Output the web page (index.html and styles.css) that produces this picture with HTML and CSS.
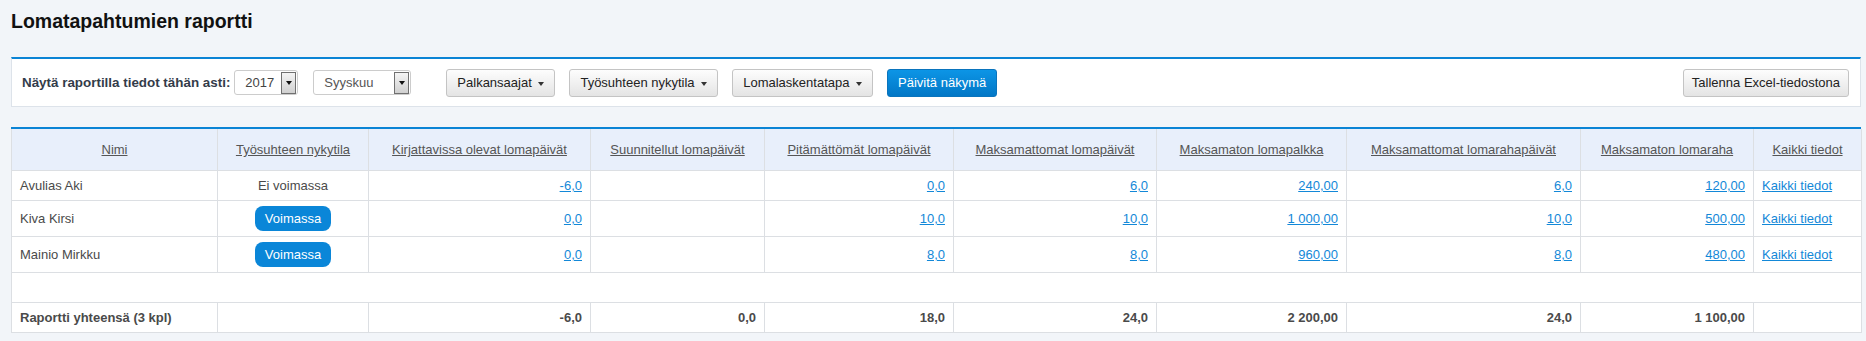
FILE: index.html
```html
<!DOCTYPE html>
<html lang="fi">
<head>
    <meta charset="UTF-8">
    <meta name="viewport" content="width=device-width, initial-scale=1.0">
    <title>Lomatapahtumien raportti</title>
    <link rel="stylesheet" href="styles.css">
</head>
<body>
    <div class="page">
        <h1 class="page-title">Lomatapahtumien raportti</h1>

        <div class="panel toolbar">
            <span class="toolbar-label">Näytä raportilla tiedot tähän asti:</span>
            <div class="fake-select select-year">
                <span class="fake-select-value">2017</span>
                <span class="fake-select-arrow"></span>
            </div>
            <div class="fake-select select-month">
                <span class="fake-select-value">Syyskuu</span>
                <span class="fake-select-arrow"></span>
            </div>
            <button class="btn btn-first">Palkansaajat <span class="caret"></span></button>
            <button class="btn">Työsuhteen nykytila <span class="caret"></span></button>
            <button class="btn">Lomalaskentatapa <span class="caret"></span></button>
            <button class="btn btn-primary">Päivitä näkymä</button>
            <button class="btn btn-export">Tallenna Excel-tiedostona</button>
        </div>

        <div class="panel report">
            <table class="report-table">
                <colgroup>
                    <col class="col-name">
                    <col class="col-status">
                    <col class="col-booked">
                    <col class="col-planned">
                    <col class="col-unused">
                    <col class="col-unpaid-days">
                    <col class="col-unpaid-pay">
                    <col class="col-bonus-days">
                    <col class="col-bonus">
                    <col class="col-all">
                </colgroup>
                <thead>
                    <tr>
                        <th><a href="#">Nimi</a></th>
                        <th><a href="#">Työsuhteen nykytila</a></th>
                        <th><a href="#">Kirjattavissa olevat lomapäivät</a></th>
                        <th><a href="#">Suunnitellut lomapäivät</a></th>
                        <th><a href="#">Pitämättömät lomapäivät</a></th>
                        <th><a href="#">Maksamattomat lomapäivät</a></th>
                        <th><a href="#">Maksamaton lomapalkka</a></th>
                        <th><a href="#">Maksamattomat lomarahapäivät</a></th>
                        <th><a href="#">Maksamaton lomaraha</a></th>
                        <th><a href="#">Kaikki tiedot</a></th>
                    </tr>
                </thead>
                <tbody>
                    <tr>
                        <td>Avulias Aki</td>
                        <td class="center">Ei voimassa</td>
                        <td class="num"><a href="#">-6,0</a></td>
                        <td class="num"></td>
                        <td class="num"><a href="#">0,0</a></td>
                        <td class="num"><a href="#">6,0</a></td>
                        <td class="num"><a href="#">240,00</a></td>
                        <td class="num"><a href="#">6,0</a></td>
                        <td class="num"><a href="#">120,00</a></td>
                        <td><a href="#">Kaikki tiedot</a></td>
                    </tr>
                    <tr>
                        <td>Kiva Kirsi</td>
                        <td class="center"><span class="badge">Voimassa</span></td>
                        <td class="num"><a href="#">0,0</a></td>
                        <td class="num"></td>
                        <td class="num"><a href="#">10,0</a></td>
                        <td class="num"><a href="#">10,0</a></td>
                        <td class="num"><a href="#">1 000,00</a></td>
                        <td class="num"><a href="#">10,0</a></td>
                        <td class="num"><a href="#">500,00</a></td>
                        <td><a href="#">Kaikki tiedot</a></td>
                    </tr>
                    <tr>
                        <td>Mainio Mirkku</td>
                        <td class="center"><span class="badge">Voimassa</span></td>
                        <td class="num"><a href="#">0,0</a></td>
                        <td class="num"></td>
                        <td class="num"><a href="#">8,0</a></td>
                        <td class="num"><a href="#">8,0</a></td>
                        <td class="num"><a href="#">960,00</a></td>
                        <td class="num"><a href="#">8,0</a></td>
                        <td class="num"><a href="#">480,00</a></td>
                        <td><a href="#">Kaikki tiedot</a></td>
                    </tr>
                    <tr class="spacer-row">
                        <td colspan="10">&nbsp;</td>
                    </tr>
                </tbody>
                <tfoot>
                    <tr>
                        <td>Raportti yhteensä (3 kpl)</td>
                        <td></td>
                        <td class="num">-6,0</td>
                        <td class="num">0,0</td>
                        <td class="num">18,0</td>
                        <td class="num">24,0</td>
                        <td class="num">2 200,00</td>
                        <td class="num">24,0</td>
                        <td class="num">1 100,00</td>
                        <td></td>
                    </tr>
                </tfoot>
            </table>
        </div>
    </div>
</body>
</html>
```

FILE: styles.css
```css
body {
    margin: 0;
    padding: 0;
    background: #f2f5f9;
    font-family: "Liberation Sans", Arial, sans-serif;
    font-size: 13px;
    color: #4a4a4a;
}

.page {
    padding: 9px 5px 0 11px;
}

.page-title {
    margin: 0;
    font-size: 19.5px;
    line-height: 24px;
    font-weight: bold;
    color: #111;
}

.panel {
    background: #fff;
    border: 1px solid #dde3ea;
    border-top: 2px solid #0b84d5;
}

/* toolbar */

.toolbar {
    margin-top: 24px;
    padding: 10px 11px 9px 10px;
    display: flex;
    align-items: baseline;
}

.toolbar-label {
    font-weight: bold;
    font-size: 13.4px;
    color: #333c4a;
    margin-right: 4px;
}

.fake-select {
    display: inline-flex;
    align-items: stretch;
    height: 25px;
    box-sizing: border-box;
    border: 1px solid #ccc;
    border-radius: 3px;
    background: #fff;
    color: #444;
    line-height: 18px;
}

.fake-select-value {
    flex: 1;
    padding: 3px 0 0 10px;
}

.fake-select-arrow {
    width: 13px;
    margin: 1px 1px 0 0;
    border: 1px solid #707070;
    background: linear-gradient(#f4f4f4, #d0d0d0);
    display: flex;
    align-items: center;
    justify-content: center;
}

.fake-select-arrow::after {
    content: "";
    border-top: 4px solid #111;
    border-left: 3.5px solid transparent;
    border-right: 3.5px solid transparent;
}

.select-year {
    width: 64px;
    margin-right: 15px;
}

.select-month {
    width: 98px;
    color: #555;
}

.btn {
    font-family: inherit;
    font-size: 13px;
    line-height: 18px;
    height: 28px;
    padding: 4px 10px;
    border: 1px solid #c4c4c4;
    border-radius: 3px;
    background: linear-gradient(#fdfdfd, #e4e4e4);
    color: #222;
    margin-left: 14px;
    cursor: pointer;
}

.btn-first {
    margin-left: 35px;
}

.caret {
    display: inline-block;
    vertical-align: middle;
    margin-left: 3px;
    border-top: 4px solid #333;
    border-left: 3.5px solid transparent;
    border-right: 3.5px solid transparent;
}

.btn-primary {
    background: linear-gradient(#0c95e6, #0277c6);
    border-color: #0a74bd;
    color: #fff;
}

.btn-export {
    margin-left: auto;
    padding: 4px 8px;
}

/* report table */

.report {
    margin-top: 20px;
    border: none;
    border-top: 2px solid #0b84d5;
}

.report-table {
    width: 100%;
    table-layout: fixed;
    border-collapse: collapse;
    border: 1px solid #d3dbe4;
    border-top: none;
}

.col-name { width: 206px; }
.col-status { width: 151px; }
.col-booked { width: 222px; }
.col-planned { width: 174px; }
.col-unused { width: 189px; }
.col-unpaid-days { width: 203px; }
.col-unpaid-pay { width: 190px; }
.col-bonus-days { width: 234px; }
.col-bonus { width: 173px; }
.col-all { width: 108px; }

.report-table th,
.report-table td {
    border: 1px solid #dcdfe3;
    padding: 5px 8px;
    line-height: 19px;
    text-align: left;
    white-space: nowrap;
}

.report-table th {
    border-top: none;
    background: #e8effb;
    text-align: center;
    font-weight: normal;
    padding: 11px 8px;
    line-height: 19px;
}

.report-table th a {
    color: #555;
}

.report-table td a {
    color: #1388d8;
}

.report-table .num {
    text-align: right;
}

.report-table .center {
    text-align: center;
}

.report-table tfoot td {
    font-weight: bold;
}

.badge {
    display: inline-block;
    line-height: 25px;
    padding: 0 10px;
    border-radius: 8px;
    background: #0a86d8;
    color: #fff;
    vertical-align: middle;
}
```
